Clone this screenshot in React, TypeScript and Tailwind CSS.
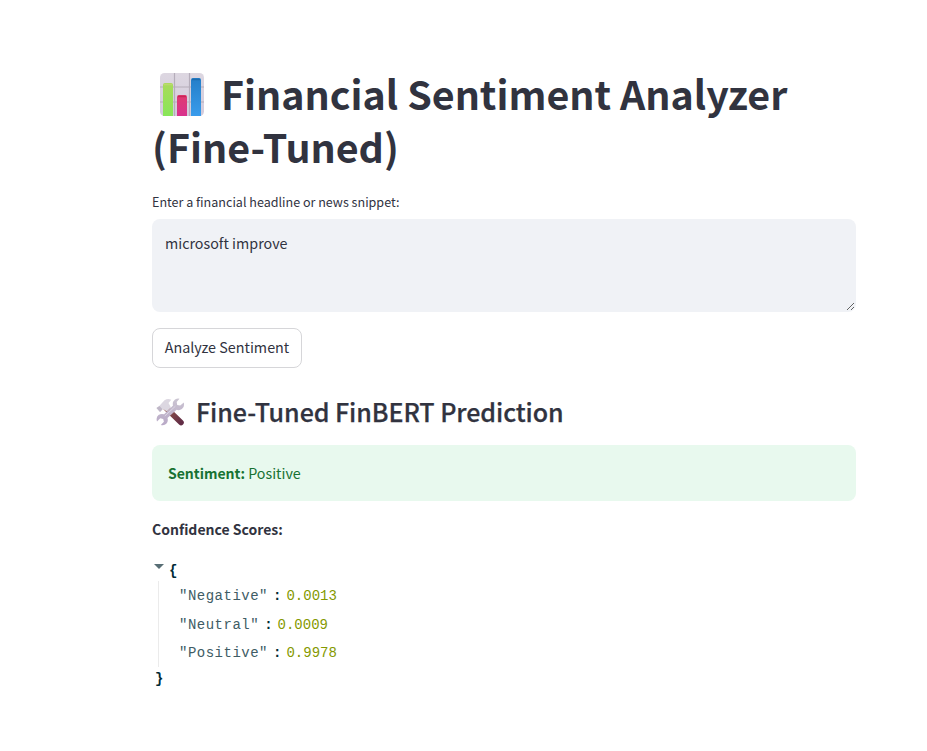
import React from "react";

const sans = "font-['Noto_Sans_CJK_SC','Noto_Sans',sans-serif]";
const mono = "font-['Liberation_Mono',monospace]";

function ChartIcon() {
  return (
    <svg className="ml-2 mr-[17px] h-[44px] w-[44px] shrink-0" viewBox="0 0 44 44">
      <defs>
        <linearGradient id="tile" x1="0" y1="0" x2="0" y2="1">
          <stop offset="0" stopColor="#ddd7e1" />
          <stop offset="1" stopColor="#d3cbdc" />
        </linearGradient>
        <linearGradient id="green" x1="0" y1="0" x2="0" y2="1">
          <stop offset="0" stopColor="#a9da5b" />
          <stop offset="1" stopColor="#88e659" />
        </linearGradient>
        <linearGradient id="pink" x1="0" y1="0" x2="0" y2="1">
          <stop offset="0" stopColor="#df3b71" />
          <stop offset="1" stopColor="#d8328e" />
        </linearGradient>
        <linearGradient id="blue" x1="0" y1="0" x2="0" y2="1">
          <stop offset="0" stopColor="#247ec8" />
          <stop offset="1" stopColor="#399cec" />
        </linearGradient>
      </defs>
      <rect width="44" height="43" y="0" rx="4.5" fill="url(#tile)" />
      <path d="M14.5 0V43M29.5 0V43M0 14H44M0 29H44" stroke="#b5adba" strokeWidth="1.2" />
      <path d="M3 43V12q0-2 2-2h6q2 0 2 2v31z" fill="url(#green)" />
      <path d="M17 43V24q0-2 2-2h6q2 0 2 2v19z" fill="url(#pink)" />
      <path d="M31 43V7q0-2 2-2h6q2 0 2 2v36z" fill="url(#blue)" />
      <path d="M4 11.5h8" stroke="#bcd86e" strokeWidth="1.5" />
      <path d="M18 23.5h8" stroke="#c92557" strokeWidth="1.5" />
      <path d="M32 6.5h8" stroke="#1d6cae" strokeWidth="1.5" />
    </svg>
  );
}

function ToolsIcon() {
  return (
    <svg className="ml-1 mr-[11px] h-[29px] w-[29px] shrink-0" viewBox="0 0 29 29">
      <defs>
        <linearGradient id="handle" x1="0" y1="0" x2="1" y2="1">
          <stop offset="0" stopColor="#96594b" />
          <stop offset="1" stopColor="#622d46" />
        </linearGradient>
        <linearGradient id="steel" x1="0" y1="0" x2="0" y2="1">
          <stop offset="0" stopColor="#cbc5d2" />
          <stop offset="1" stopColor="#b9a9c7" />
        </linearGradient>
      </defs>
      <path d="M10 10L25 24.5" stroke="url(#handle)" strokeWidth="5.6" strokeLinecap="round" />
      <path d="M.5 10L3 8.2 8.5 2.2Q12 .2 15.3 1.8L12.5 5l2.5 4.5-4.2 4L7 11l-3 3z" fill="#dcd7e1" />
      <path d="M.5 10L3.5 8l3 3.2L4 14z" fill="#bfb7c7" />
      <path d="M19 1.6q2.6-1.6 4.5-.8L20.7 4.1l.5 3 3 .5 3.6-3.1q1 4.6-1.9 6.6-2.6 1.7-5.3.6L11.5 20q1 3.7-1.2 5.8-2.2 2-5.5 1.1l3.1-3.2-.7-2.7-2.9-.8L1 23.4q-1.3-4 1.5-6.4 2.6-1.7 5.6-.7l8.9-8.7Q16 4.2 19 1.6z" fill="url(#steel)" />
      <path d="M8.8 18L19.4 8.2" stroke="#dcd6e4" strokeWidth="1" />
    </svg>
  );
}

const scores = [
  { name: "Negative", value: "0.0013" },
  { name: "Neutral", value: "0.0009" },
  { name: "Positive", value: "0.9978" },
];

export default function App() {
  return (
    <main className={`h-[751px] w-[927px] overflow-hidden bg-white pl-[152px] pt-[69px] text-[#31333f] ${sans}`}>
      <div className="w-[704px]">
        <h1 className="h-[106px] text-[39.4px] font-bold leading-[53px]">
          <span className="flex h-[51px] items-center whitespace-nowrap">
            <ChartIcon />
            <span className="pb-[5px]">Financial Sentiment Analyzer</span>
          </span>
          <span className="-mt-px block">(Fine-Tuned)</span>
        </h1>
        <label htmlFor="headline" className="mt-[16px] block h-[22px] text-[12.55px] leading-[21px]">
          Enter a financial headline or news snippet:
        </label>
        <div className="mt-[6px] flex h-[93px] rounded-lg bg-[#f0f2f6]">
          <textarea
            id="headline"
            className="mr-px h-[92px] w-full resize-y bg-transparent px-[13px] py-[11px] text-[14.3px] leading-[25px] outline-none"
            defaultValue="microsoft improve"
          />
        </div>
        <button className="mt-4 flex h-10 w-[150px] items-center justify-center whitespace-nowrap rounded-lg border border-[#d6d6d9] pb-[2px] text-[14.35px]">
          Analyze Sentiment
        </button>
        <h2 className="mt-[27px] flex h-[34px] items-center whitespace-nowrap text-[25.06px] font-medium">
          <ToolsIcon />
          <span className="tracking-[-0.07px] [-webkit-text-stroke:0.25px]">Fine-Tuned FinBERT Prediction</span>
        </h2>
        <div className="mt-[16px] flex h-14 items-center gap-[3px] rounded-lg bg-[#e8f9ee] px-4 text-[14.3px] text-[#177233]">
          <strong className="text-[14px] font-bold">Sentiment:</strong>
          <span>Positive</span>
        </div>
        <p className="mt-[15px] text-[14px] font-bold leading-[26px]">Confidence Scores:</p>
        <div className={`mt-[18px] text-[14px] text-[#002b36] ${mono}`}>
          <div className="flex h-[21px] items-center">
            <svg className="mb-[8px] ml-[2px] mr-[5px] h-[5px] w-[10px]" viewBox="0 0 10 5">
              <path d="M0 0h10L5 5z" fill="#586e75" />
            </svg>
            <span className="pt-[2px] font-bold">{"{"}</span>
          </div>
          <div className="ml-[6px] h-[86px] border-l border-[#ebebeb] pl-5">
            {scores.map((score) => (
              <div key={score.name} className="flex h-[28.5px] items-center whitespace-pre pt-[2.5px]">
                <span className="tracking-[0.5px] text-[#405c65]">{`"${score.name}"`}</span>
                <span className="ml-[5px] mr-[5px] font-bold">:</span>
                <span className="text-[#859900]">{score.value}</span>
              </div>
            ))}
          </div>
          <div className="flex h-[22px] items-center pl-[3px] pt-[2px] font-bold">{"}"}</div>
        </div>
      </div>
    </main>
  );
}
